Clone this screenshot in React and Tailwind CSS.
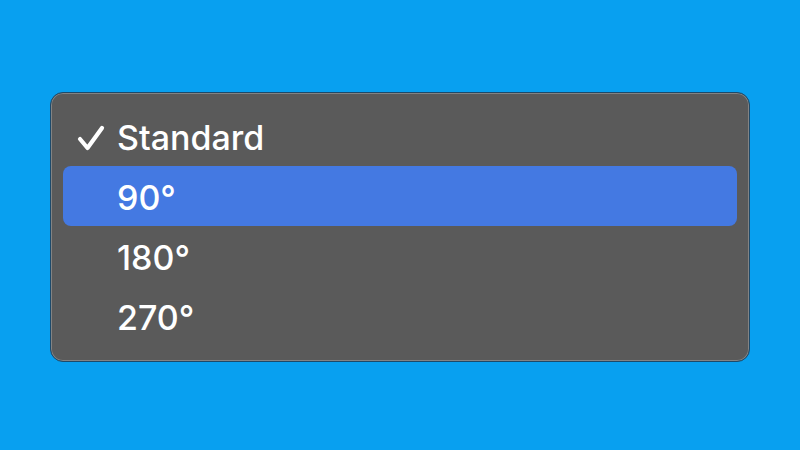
const options = [
  { label: 'Standard', checked: true },
  { label: '90°', active: true },
  { label: '180°' },
  { label: '270°' },
];

function Check() {
  return (
    <svg width="28" height="26" viewBox="0 0 28 26" fill="none">
      <path d="M3 14 L10.5 23 L25 3" stroke="white" strokeWidth="4.2" strokeLinecap="round" strokeLinejoin="round" />
    </svg>
  );
}

export default function App() {
  return (
    <div className="w-[800px] h-[450px] bg-[#08a0f0] pt-[92px] pl-[50px]" style={{ fontFamily: 'Inter, "Noto Sans", sans-serif' }}>
      <div className="w-[700px] h-[270px] rounded-[13px] bg-[#5a5a5a] border border-[#1d4a6a] shadow-[inset_0_0_0_1px_rgba(255,255,255,0.25)] px-[12px] py-[13px]">
        {options.map((opt) => (
          <div
            key={opt.label}
            className={`h-[60px] flex items-center rounded-[8px] ${opt.active ? 'bg-[#4479e2]' : ''}`}
          >
            <div className="w-[54px] flex justify-end pr-[12px] pt-[3px]">
              {opt.checked && <Check />}
            </div>
            <span className="text-white text-[34px] font-medium leading-none pt-[4px]">{opt.label}</span>
          </div>
        ))}
      </div>
    </div>
  );
}
